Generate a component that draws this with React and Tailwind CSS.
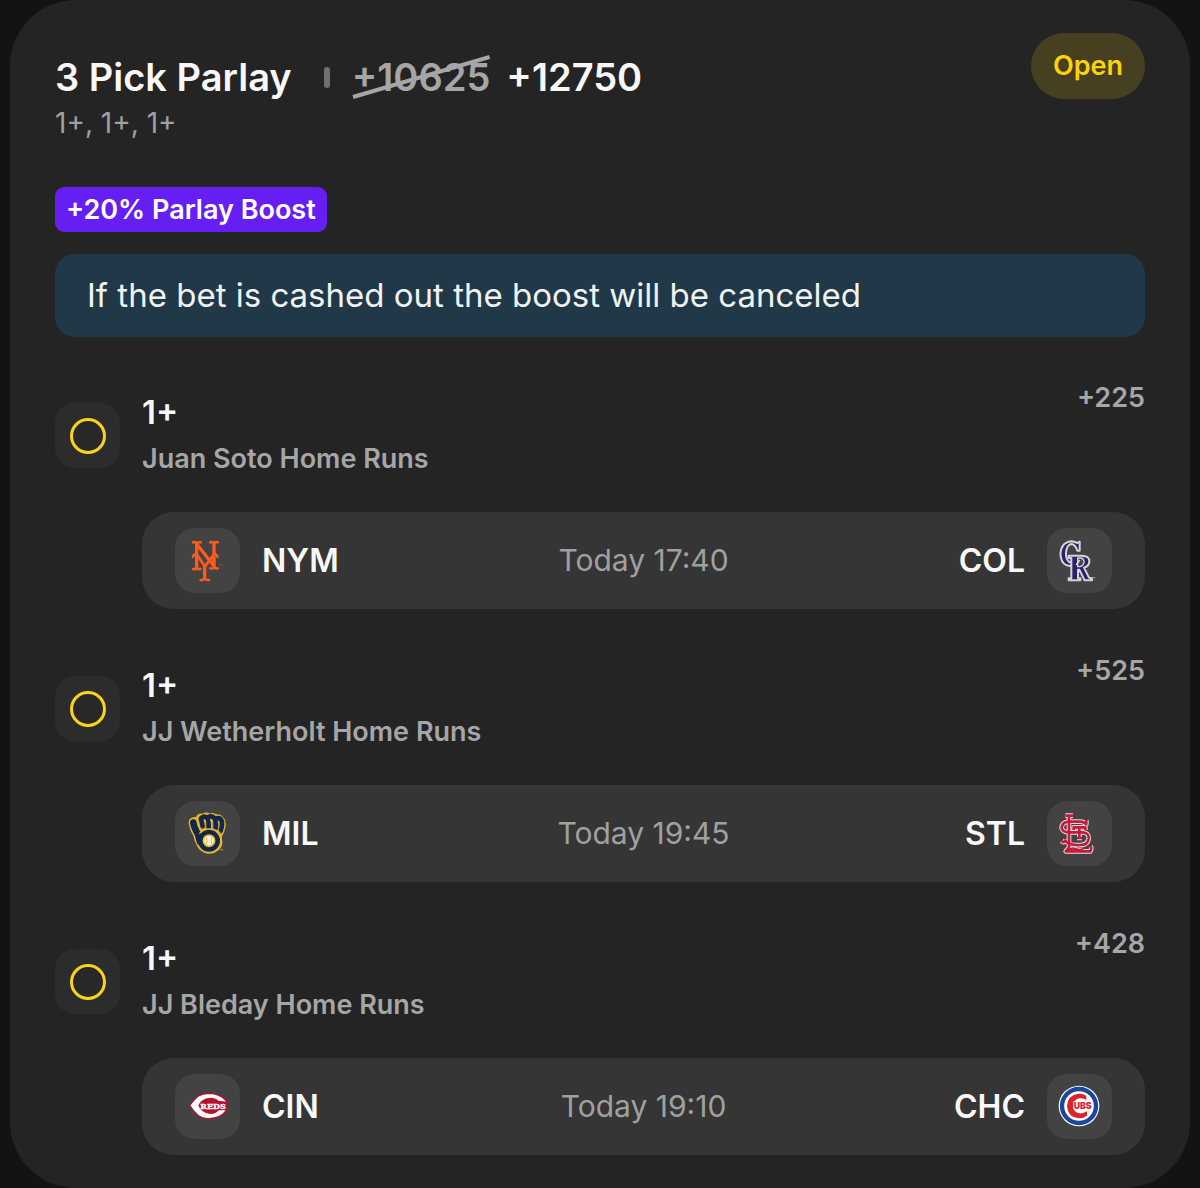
import React from 'react';

const MetsLogo = () => (
  <svg viewBox="15 24 195 195" className="size-full" role="img" aria-label="New York Mets">
    <g fill="none" stroke="#fd5a1e" strokeLinecap="round" strokeLinejoin="round">
      {/* N */}
      <path d="M80 70V144M132 70V144" strokeWidth="10" strokeLinecap="butt" />
      <path d="M80 72L132 138" strokeWidth="10" />
      <path d="M69 67Q75 65 80 69Q85 66 92 67M121 67Q127 65 132 69Q137 65 143 67" strokeWidth="8" />
      <path d="M69 147Q75 149 80 144Q86 149 91 147M121 145Q127 147 132 142Q138 147 143 145" strokeWidth="8" />
      {/* Y */}
      <path d="M69 110Q73 99 82 105L104 139V176" strokeWidth="8" />
      <path d="M142 110Q138 99 130 106L105 139" strokeWidth="8" />
      <path d="M104 139V176" strokeWidth="10" />
      <path d="M92 180Q99 181 104 176Q109 181 117 180" strokeWidth="8" />
    </g>
    <text x="147" y="144" fontSize="15" fill="#c2572c" className="font-['Inter',sans-serif]">™</text>
  </svg>
);

const RockiesLogo = () => (
  <svg viewBox="24 25 195 195" className="size-full" role="img" aria-label="Colorado Rockies">
    <g fill="none" strokeLinejoin="round">
      {/* C */}
      <path
        d="M122 93V66L115 70Q94 59 76 73Q62 88 65 110Q69 137 93 139Q106 139 114 130L109 124Q99 132 89 126Q80 117 81 99Q83 76 97 73Q109 74 115 93Z"
        fill="#2c2068"
        stroke="#d3d5da"
        strokeWidth="6"
      />
      {/* R */}
      <path
        d="M89 108H128Q152 109 151 126Q150 140 135 144L150 174L159 176V182H137L121 150H117V176H124V182H89V176H97V115H89Z"
        fill="#2c2068"
        stroke="#d3d5da"
        strokeWidth="6"
      />
      <path d="M116 115H126Q135 117 135 126Q134 138 124 141H116Z" fill="#434346" stroke="#d3d5da" strokeWidth="4" />
      <path d="M112 136L122 121" stroke="#d3d5da" strokeWidth="5" />
    </g>
    <text x="160" y="183" fontSize="15" fill="#c9c9c9" className="font-['Inter',sans-serif]">™</text>
  </svg>
);

const BrewersLogo = () => (
  <svg viewBox="15 18 195 195" className="size-full" role="img" aria-label="Milwaukee Brewers">
    <path
      d="M58 85Q57 72 70 69L80 67Q84 55 99 58Q109 51 119 58Q129 53 138 60Q151 58 158 69Q166 75 165 93L160 112Q153 120 154 133Q158 151 147 162Q133 175 114 174Q94 171 84 154Q75 139 72 122Q61 104 58 85Z"
      fill="#e7b52c"
      stroke="#e7b52c"
      strokeWidth="4"
      strokeLinejoin="round"
    />
    <g fill="none" stroke="#12284b" strokeLinecap="round" strokeLinejoin="round">
      {/* thumb side */}
      <path d="M70 83Q72 98 84 118L90 140" strokeWidth="20" />
      {/* fingers */}
      <path d="M93 72L98 94" strokeWidth="14" />
      <path d="M93 70Q100 62 108 67Q117 71 116 98" strokeWidth="14" />
      <path d="M113 67Q126 60 133 69Q138 79 137 100" strokeWidth="14" />
      <path d="M139 70Q152 67 156 80Q157 95 152 108" strokeWidth="14" />
    </g>
    <path d="M106 98V84M127 98V84M146 98V84" stroke="#a8976a" strokeWidth="3" strokeLinecap="round" />
    <circle cx="117" cy="137" r="33" fill="#12284b" />
    <path d="M88 116Q100 102 117 102Q137 102 151 114" fill="none" stroke="#e7b52c" strokeWidth="4" />
    <circle cx="117" cy="137" r="17" fill="#fff8df" stroke="#e7b52c" strokeWidth="5" />
    <path d="M109 127Q113 137 109 147M125 127Q121 137 125 147" fill="none" stroke="#e7b52c" strokeWidth="3" />
    <text x="149" y="173" fontSize="16" fill="#cbb258" className="font-['Inter',sans-serif]">™</text>
  </svg>
);

// the monogram is drawn twice: a wide white outline, then the red strokes on it
const CardinalsMonogram = () => (
  <>
    {/* L */}
    <path d="M79 62H102M90 63V158L80 169H154Q159 160 155 154" />
    <path d="M87 169Q98 157 108 162Q121 168 133 163" />
    {/* S */}
    <path d="M142 75V88Q134 79 120 80H88Q68 83 68 99Q71 112 90 112H130Q151 113 149 132Q146 150 124 150Q94 153 76 136" />
    <path d="M68 138Q75 146 80 134" />
    {/* T */}
    <path d="M104 105V97H139V105M121 98V128M114 129H129" />
  </>
);

const CardinalsLogo = () => (
  <svg viewBox="24 18 195 195" className="size-full" role="img" aria-label="St. Louis Cardinals">
    <g fill="none" stroke="#e6dcdd" strokeWidth="14" strokeLinejoin="round">
      <CardinalsMonogram />
    </g>
    <g fill="none" stroke="#c8193c" strokeWidth="8" strokeLinejoin="round">
      <CardinalsMonogram />
    </g>
    <text x="164" y="174" fontSize="15" fill="#9c2340" className="font-['Inter',sans-serif]">™</text>
  </svg>
);

const RedsLogo = () => (
  <svg viewBox="15 18 195 195" className="size-full" role="img" aria-label="Cincinnati Reds">
    <path
      d="M59 112Q73 93 85 84Q98 76 117 76Q151 77 168 98V129Q151 151 117 152Q97 152 84 142Q72 132 59 112Z"
      fill="#fff"
      stroke="#b5122d"
      strokeWidth="4"
      strokeLinejoin="round"
    />
    <path
      d="M146 98Q136 89 121 89Q92 92 85 112Q92 134 121 138Q137 138 147 127H170V101Z"
      fill="#b5122d"
    />
    <text
      x="129"
      y="122"
      textAnchor="middle"
      fontSize="24"
      fontWeight="700"
      fill="#fff"
      stroke="#fff"
      strokeWidth="1"
      className="font-['DejaVu_Serif',serif]"
    >
      REDS
    </text>
  </svg>
);

const CubsLogo = () => (
  <svg viewBox="24 18 195 195" className="size-full" role="img" aria-label="Chicago Cubs">
    <circle cx="120" cy="114" r="61" fill="#fff" />
    <circle cx="120" cy="114" r="51" fill="none" stroke="#1b479d" strokeWidth="13" />
    <path
      d="M142 96V83Q132 76 118 77Q86 81 84 114Q86 147 118 151Q134 151 144 143V130Q133 137 122 136Q103 133 102 114Q104 94 122 91Q134 90 142 96Z"
      fill="#d8242c"
    />
    <text
      x="131"
      y="123"
      textAnchor="middle"
      fontSize="26"
      fontWeight="900"
      fill="#d8242c"
      stroke="#fff"
      strokeWidth="4"
      paintOrder="stroke"
      className="font-['Inter',sans-serif]"
    >
      UBS
    </text>
    <circle cx="151" cy="131" r="3" fill="none" stroke="#8f9cbc" strokeWidth="1" />
  </svg>
);

const legs = [
  {
    player: 'Juan Soto Home Runs',
    odds: '+225',
    time: 'Today 17:40',
    away: { code: 'NYM', Logo: MetsLogo },
    home: { code: 'COL', Logo: RockiesLogo },
  },
  {
    player: 'JJ Wetherholt Home Runs',
    odds: '+525',
    time: 'Today 19:45',
    away: { code: 'MIL', Logo: BrewersLogo },
    home: { code: 'STL', Logo: CardinalsLogo },
  },
  {
    player: 'JJ Bleday Home Runs',
    odds: '+428',
    time: 'Today 19:10',
    away: { code: 'CIN', Logo: RedsLogo },
    home: { code: 'CHC', Logo: CubsLogo },
  },
];

const TeamTile = ({ Logo }) => (
  <div className="size-[65px] shrink-0 rounded-[20px] bg-[#434343]">
    <Logo />
  </div>
);

const Leg = ({ leg }) => (
  <li className="flex gap-[22px]">
    <div className="mt-[19px] flex size-[65px] shrink-0 items-center justify-center rounded-[20px] bg-[#2c2c2c]">
      <span className="size-9 rounded-full border-3 border-[#fbd31c] bg-[#282828]"></span>
    </div>
    <div className="min-w-0 flex-1">
      <div className="flex items-start justify-between">
        <div className="pt-[10px]">
          <h2 className="text-[33px] leading-9 font-semibold text-[#f7f7f7]">1+</h2>
          <p className="mt-3 text-[27px] leading-[34px] font-semibold text-[#a6a6a6]">{leg.player}</p>
        </div>
        <span className="text-[27px] leading-7 font-semibold text-[#a6a6a6]">{leg.odds}</span>
      </div>
      <div className="mt-9 grid h-[97px] grid-cols-[1fr_auto_1fr] items-center rounded-[32px] bg-[#353535] px-[33px]">
        <div className="flex items-center gap-[22px]">
          <TeamTile Logo={leg.away.Logo} />
          <span className="text-[32px] font-semibold text-[#f7f7f7]">{leg.away.code}</span>
        </div>
        <time className="text-[30px] text-[#a0a0a0]">{leg.time}</time>
        <div className="flex items-center justify-end gap-[22px]">
          <span className="text-[32px] font-semibold text-[#f7f7f7]">{leg.home.code}</span>
          <TeamTile Logo={leg.home.Logo} />
        </div>
      </div>
    </div>
  </li>
);

const App = () => {
  return (
    <div className="min-h-screen bg-[#131313] px-[10px] font-['Inter','Liberation_Sans',sans-serif]">
      <main className="rounded-[66px] bg-[#242424] px-[45px] pt-[33px] pb-[33px]">
        <header className="flex items-start justify-between">
          <div className="pt-[21px]">
            <div className="flex items-center">
              <h1 className="text-[38px] leading-[46px] font-semibold text-[#f7f7f7]">3 Pick Parlay</h1>
              <span className="mr-[22px] ml-8 h-[21px] w-[6px] rounded-full bg-[#707070]"></span>
              <s className="relative text-[38px] leading-[46px] font-semibold text-[#a6a6a6] no-underline">
                +10625
                {/* slanted strike-through */}
                <svg
                  viewBox="0 0 139 46"
                  preserveAspectRatio="none"
                  className="absolute inset-0 size-full"
                  aria-hidden="true"
                >
                  <path d="M1 43L138 3" stroke="#a6a6a6" strokeWidth="4" />
                </svg>
              </s>
              <span className="ml-4 text-[38px] leading-[46px] font-semibold text-[#f7f7f7]">+12750</span>
            </div>
            <p className="mt-[6px] text-[28px] leading-[34px] text-[#a0a0a0]">1+, 1+, 1+</p>
          </div>
          <button className="h-[66px] rounded-full bg-[#474020] px-[22px] text-[27px] font-semibold text-[#fdd20d]">
            Open
          </button>
        </header>

        <div className="mt-[47px] flex">
          <span className="rounded-[9px] bg-[#661ff2] px-[11px] text-[27px] leading-[45px] font-semibold text-white">
            +20% Parlay Boost
          </span>
        </div>
        <p className="mt-[22px] rounded-[20px] bg-[#203848] px-8 text-[33px] leading-[83px] text-[#f0f2f3]">
          If the bet is cashed out the boost will be canceled
        </p>

        <ul className="mt-[47px] flex flex-col gap-12">
          {legs.map((leg) => (
            <Leg key={leg.player} leg={leg} />
          ))}
        </ul>
      </main>
    </div>
  );
};

export default App;
